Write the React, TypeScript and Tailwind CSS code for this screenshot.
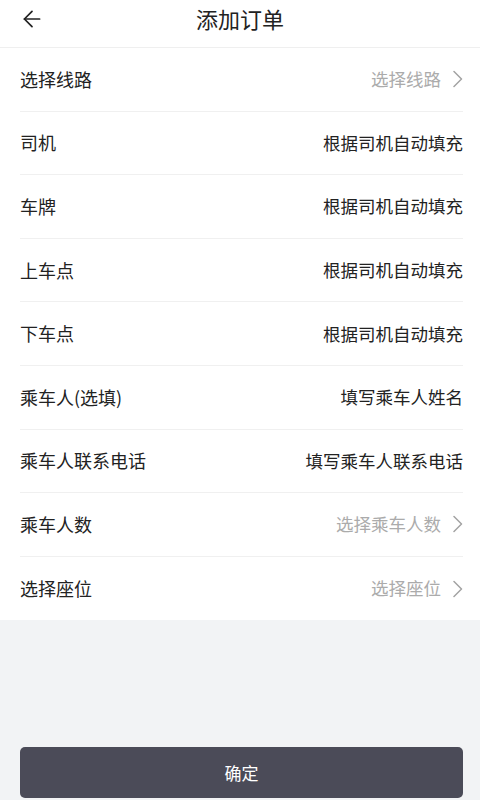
import { ArrowLeft } from "lucide-react";

interface Field {
  label: string;
  value: string;
  picker?: boolean;
}

const fields: Field[] = [
  { label: "选择线路", value: "选择线路", picker: true },
  { label: "司机", value: "根据司机自动填充" },
  { label: "车牌", value: "根据司机自动填充" },
  { label: "上车点", value: "根据司机自动填充" },
  { label: "下车点", value: "根据司机自动填充" },
  { label: "乘车人(选填)", value: "填写乘车人姓名" },
  { label: "乘车人联系电话", value: "填写乘车人联系电话" },
  { label: "乘车人数", value: "选择乘车人数", picker: true },
  { label: "选择座位", value: "选择座位", picker: true },
];

function Chevron() {
  return (
    <svg width="10" height="18" viewBox="0 0 10 18" fill="none" className="ml-3">
      <path d="M1 1.5 L8.5 9 L1 16.5" stroke="#a3a3a3" strokeWidth="1.5" strokeLinecap="round" strokeLinejoin="round" />
    </svg>
  );
}

export default function App() {
  return (
    <div
      className="w-[480px] h-[800px] flex flex-col bg-[#f2f3f5] overflow-hidden"
      style={{ fontFamily: '"Noto Sans CJK SC", "Noto Sans", sans-serif' }}
    >
      <div className="bg-white h-[48px] shrink-0 border-b border-[#efefef] flex items-center relative">
        <button className="pl-[19px] pr-2 h-full flex items-center -mt-[10px]">
          <ArrowLeft size={26} strokeWidth={1.6} color="#222" />
        </button>
        <h1 className="absolute left-0 right-0 text-center text-[22px] text-[#222] -mt-[10px] pointer-events-none">
          添加订单
        </h1>
      </div>

      <div className="bg-white pl-5 pr-[17px] shrink-0">
        {fields.map((f, i) => (
          <div
            key={f.label}
            className={`h-[63.6px] flex items-center justify-between ${
              i < fields.length - 1 ? "border-b border-[#f0f0f0]" : ""
            }`}
          >
            <span className="text-[18px] text-[#222]">{f.label}</span>
            <div className="flex items-center">
              <span className={`text-[17.5px] ${f.picker ? "text-[#ababab]" : "text-[#222]"}`}>{f.value}</span>
              {f.picker && <Chevron />}
            </div>
          </div>
        ))}
      </div>

      <div className="flex-1 flex flex-col justify-end pl-5 pr-[17px] pb-[2px]">
        <button className="h-[51px] w-full rounded-[5px] bg-[#4b4b58] text-white text-[17px]">确定</button>
      </div>
    </div>
  );
}
